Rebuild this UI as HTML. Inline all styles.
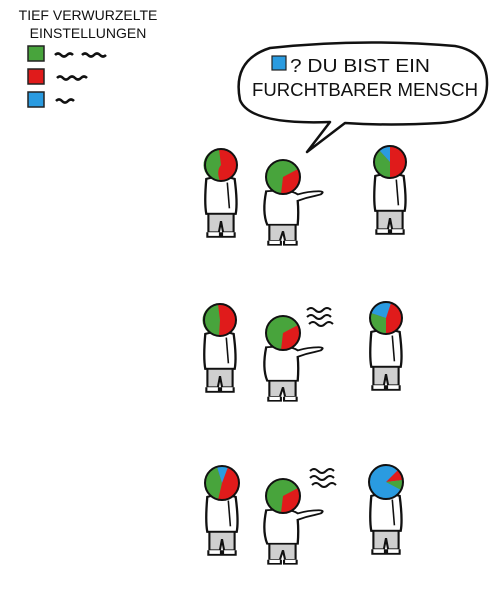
<!DOCTYPE html>
<html><head><meta charset="utf-8"><style>
html,body{margin:0;padding:0;background:#fff;width:500px;height:592px;overflow:hidden}
</style></head><body>
<svg width="500" height="592" viewBox="0 0 500 592" xmlns="http://www.w3.org/2000/svg" font-family="Liberation Sans, sans-serif">
<defs>
<g id="stand0">
  <path d="M-14,14 Q-16,40 -14,52 L14,52 Q16,40 13,14 Q0,10 -14,14Z" fill="#fff" stroke="#111" stroke-width="2.2"/>
  <path d="M6,18 L8,46" stroke="#111" stroke-width="1.5" fill="none"/>
  <path d="M-12,52 L-12,72 L-2,72 L0,60 L2,72 L12,72 L12,52Z" fill="#cfcfcf" stroke="#111" stroke-width="2"/>
  <path d="M-13,72 L-13,77 L-1,77 L-1,72 M1,72 L1,77 L13,77 L13,72" fill="#fff" stroke="#111" stroke-width="2"/>
</g>
<g id="stand"><use href="#stand0" transform="translate(0,1) scale(1.05,0.92)"/></g>
<g id="talk0">
  <path d="M-16,14 Q-20,40 -15,56 L14,56 Q15,40 14,26 Q22,22 30,20 L36,18 Q40,14 34,14 Q24,14 14,18 Q8,12 -16,14Z" fill="#fff" stroke="#111" stroke-width="2.2"/>
  <path d="M-13,56 L-13,76 L-3,76 L0,64 L2,76 L12,76 L12,56Z" fill="#cfcfcf" stroke="#111" stroke-width="2"/>
  <path d="M-14,76 L-14,81 L-2,81 L-2,76 M1,76 L1,81 L13,81 L13,76" fill="#fff" stroke="#111" stroke-width="2"/>
</g>
<g id="talk"><use href="#talk0" transform="translate(0,3) scale(1.05,0.8)"/></g>
<g id="waves" fill="none" stroke="#111" stroke-width="2">
  <path d="M0,0 q4,-4 8,0 t8,0 t8,0"/><path d="M0,7 q4,-4 8,0 t8,0 t8,0"/><path d="M2,14 q4,-4 8,0 t8,0 t8,0"/>
</g>
</defs>

<!-- legend -->
<text x="88" y="20" font-size="14" text-anchor="middle" fill="#111">TIEF VERWURZELTE</text>
<text x="88" y="38" font-size="14" text-anchor="middle" fill="#111">EINSTELLUNGEN</text>
<rect x="28" y="46" width="16" height="15" fill="#48a43c" stroke="#222" stroke-width="1.5"/>
<rect x="28" y="69" width="16" height="15" fill="#e01b1b" stroke="#222" stroke-width="1.5"/>
<rect x="28" y="92" width="16" height="15" fill="#2a9be0" stroke="#222" stroke-width="1.5"/>
<path d="M55,55 q3,-3 6,0 t6,0 t6,0 M82,55 q3,-3 6,0 t6,0 t6,0 t6,0" stroke="#111" stroke-width="2.5" fill="none"/>
<path d="M57,78 q3,-3 6,0 t6,0 t6,0 t6,0 t6,0" stroke="#111" stroke-width="2.5" fill="none"/>
<path d="M56,101 q3,-3 6,0 t6,0 t6,0" stroke="#111" stroke-width="2.5" fill="none"/>

<!-- bubble -->
<path d="M330,122 Q250,125 240,100 Q232,60 270,48 Q360,38 455,46 Q488,52 487,85 Q486,120 440,123 Q390,126 345,123 L307,152 Z" fill="#fff" stroke="#111" stroke-width="2.5" stroke-linejoin="round"/>
<rect x="272" y="56" width="14" height="14" fill="#2a9be0" stroke="#222" stroke-width="1.2"/>
<text x="290" y="72" font-size="18" textLength="140" lengthAdjust="spacingAndGlyphs" fill="#111">? DU BIST EIN</text>
<text x="252" y="96" font-size="18" textLength="226" lengthAdjust="spacingAndGlyphs" fill="#111">FURCHTBARER MENSCH</text>

<!-- ROW 1 -->
<g transform="translate(221,165)"><use href="#stand"/>
<circle r="16" fill="#e01b1b"/><path d="M0,0 L-2,-16 A16,16 0 0,0 -1,16 Q-5,6 0,0Z" fill="#48a43c"/><circle r="16" fill="none" stroke="#111" stroke-width="2"/></g>
<g transform="translate(283,177)"><use href="#talk"/>
<circle r="17" fill="#48a43c"/><path d="M0,0 L15,-8 A17,17 0 0,1 -2,17 Z" fill="#e01b1b"/><circle r="17" fill="none" stroke="#111" stroke-width="2"/></g>
<g transform="translate(390,162)"><use href="#stand"/>
<circle r="16" fill="#e01b1b"/><path d="M0,0 L0,16 A16,16 0 0,1 -11,-12 Z" fill="#48a43c"/><path d="M0,0 L-11,-12 A16,16 0 0,1 0,-16Z" fill="#2a9be0"/><circle r="16" fill="none" stroke="#111" stroke-width="2"/></g>

<!-- ROW 2 -->
<g transform="translate(220,320)"><use href="#stand"/>
<circle r="16" fill="#e01b1b"/><path d="M0,0 L-2,-16 A16,16 0 0,0 -1,16 Z" fill="#48a43c"/><circle r="16" fill="none" stroke="#111" stroke-width="2"/></g>
<g transform="translate(283,333)"><use href="#talk"/>
<circle r="17" fill="#48a43c"/><path d="M0,0 L15,-8 A17,17 0 0,1 -2,17 Z" fill="#e01b1b"/><circle r="17" fill="none" stroke="#111" stroke-width="2"/></g>
<use href="#waves" transform="translate(307,310)"/>
<g transform="translate(386,318)"><use href="#stand"/>
<circle r="16" fill="#e01b1b"/><path d="M0,0 L0,16 A16,16 0 0,1 -15,-5 Z" fill="#48a43c"/><path d="M0,0 L-15,-5 A16,16 0 0,1 5,-15Z" fill="#2a9be0"/><circle r="16" fill="none" stroke="#111" stroke-width="2"/></g>

<!-- ROW 3 -->
<g transform="translate(222,483)"><use href="#stand"/>
<circle r="17" fill="#e01b1b"/><path d="M0,0 L-4,17 A17,17 0 0,1 -5,-16 Z" fill="#48a43c"/><path d="M0,0 L-5,-16 A17,17 0 0,1 6,-16Z" fill="#2a9be0"/><circle r="17" fill="none" stroke="#111" stroke-width="2"/></g>
<g transform="translate(283,496)"><use href="#talk"/>
<circle r="17" fill="#48a43c"/><path d="M0,0 L15,-8 A17,17 0 0,1 -2,17 Z" fill="#e01b1b"/><circle r="17" fill="none" stroke="#111" stroke-width="2"/></g>
<use href="#waves" transform="translate(310,471)"/>
<g transform="translate(386,482)"><use href="#stand"/>
<circle r="17" fill="#2a9be0"/><path d="M0,0 L12,-12 A17,17 0 0,1 17,-2 Z" fill="#e01b1b"/><path d="M0,0 L17,-2 A17,17 0 0,1 15,8 Z" fill="#48a43c"/><circle r="17" fill="none" stroke="#111" stroke-width="2"/></g>
</svg>
</body></html>
